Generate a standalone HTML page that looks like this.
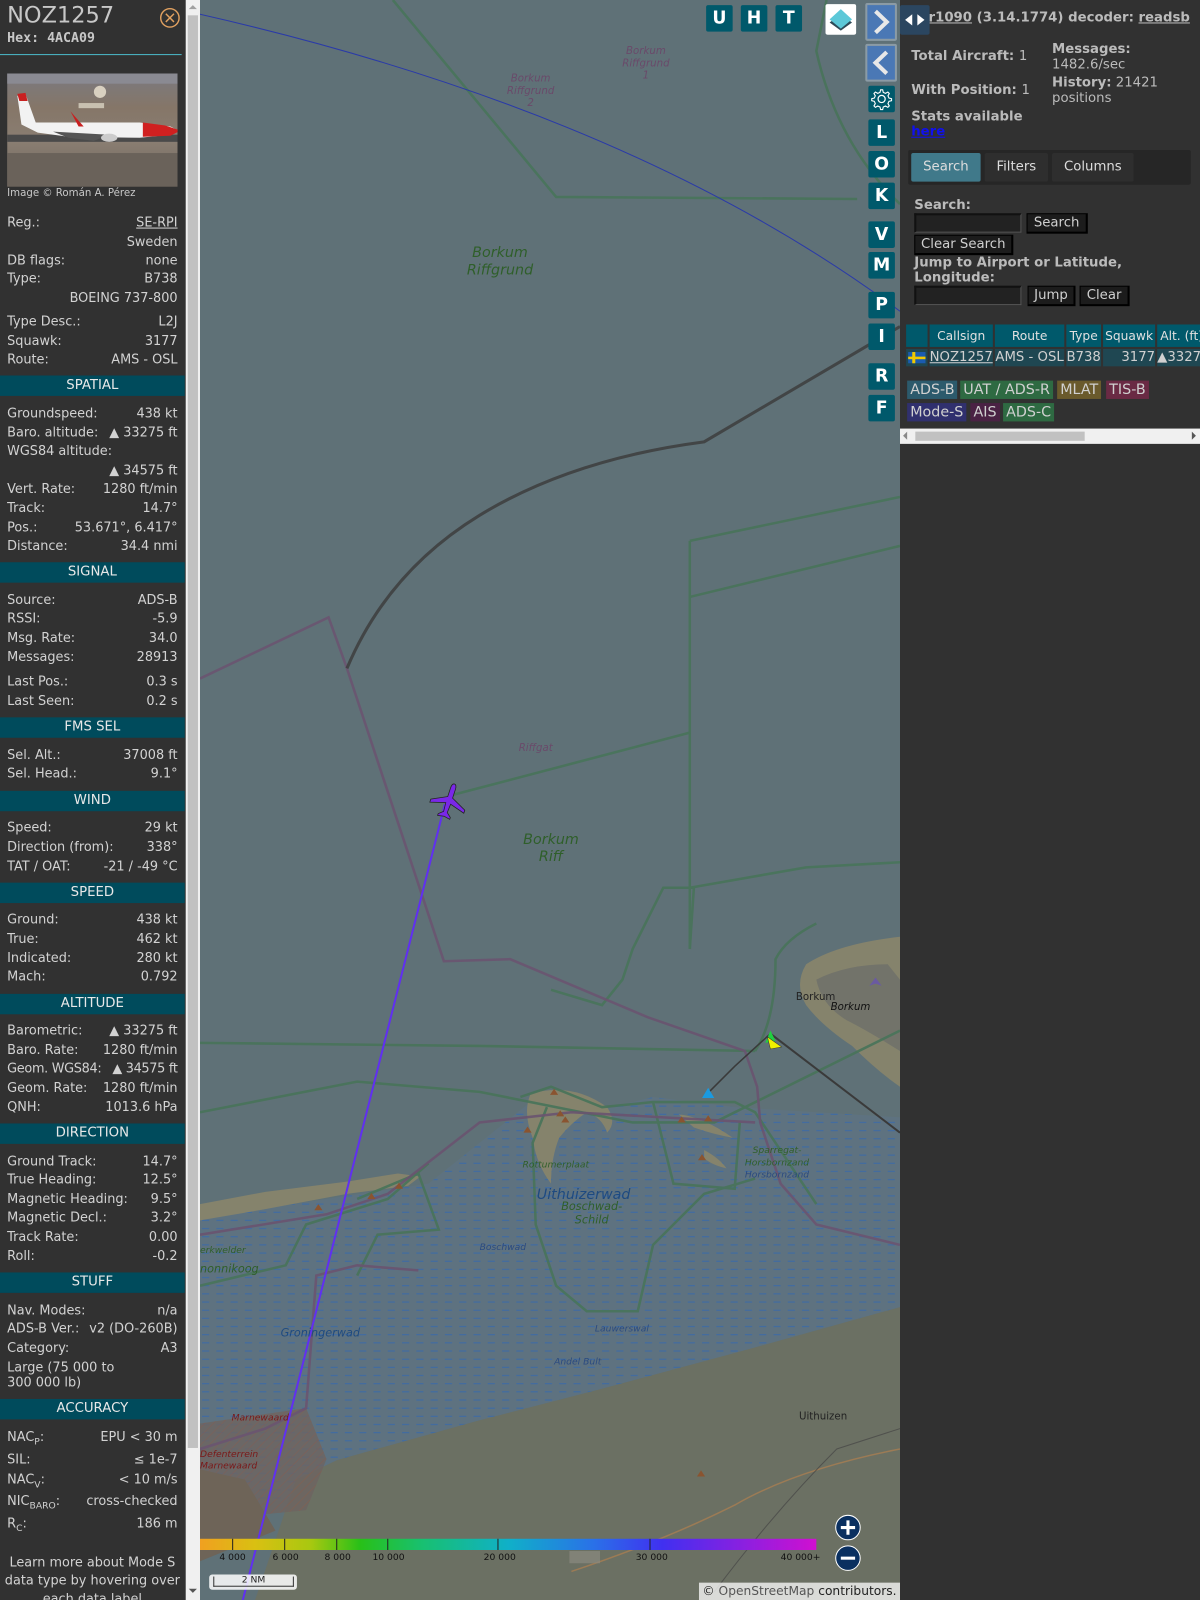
<!DOCTYPE html>
<html><head><meta charset="utf-8">
<style>
html,body{margin:0;padding:0;background:#313131;overflow:hidden;width:1200px;height:1600px}
#root{position:absolute;left:0;top:0;width:1176px;height:1568px;transform:scale(1.020408);transform-origin:0 0;overflow:hidden;font-family:"DejaVu Sans","Liberation Sans",sans-serif;font-size:13px;color:#d2d2d2}
.a{position:absolute}
.r{position:absolute;left:7px;width:167px;height:18px;line-height:18px;white-space:nowrap;display:flex;justify-content:space-between;font-size:12.6px}
.h{position:absolute;left:0;width:181px;height:20px;line-height:20px;background:#004b5c;color:#e8e8e8;text-align:center}
.btn{position:absolute;width:26px;height:26px;background:#00596b;border-radius:2px;color:#fff;font-weight:bold;font-size:17px;text-align:center;line-height:26px;font-family:"DejaVu Sans",sans-serif}
.rb{position:absolute;background:#1c1c1c;border:1px solid #000;border-right:2px solid #000;border-bottom:2px solid #000;color:#d0d0d0;font-size:13px;line-height:17px;text-align:center;box-sizing:border-box}
.inp{position:absolute;background:#222;border-top:2px solid #111;border-left:2px solid #111;border-bottom:1px solid #555;border-right:1px solid #555;box-sizing:border-box}
.th{position:absolute;top:318px;height:22px;line-height:22px;background:#00596b;color:#e0e0e0;text-align:center;font-size:12px}
.td{position:absolute;top:342px;height:17px;line-height:17px;background:#1f4752;color:#d0d0d0;font-size:13px;white-space:nowrap;overflow:hidden}
.bd{position:absolute;height:18px;line-height:18px;font-size:14px;color:#d0d0d0;padding:0 3px}
.ml{position:absolute;font-style:italic;color:#2f5f2a;font-size:14px;text-align:center;line-height:17px}
.sl{position:absolute;font-style:italic;color:#6a4a6a;font-size:10px;text-align:center;line-height:12px}
.lg{position:absolute;top:1522px;font-size:9px;color:#111}
</style></head><body>
<div id="root">

<svg class="a" style="left:196px;top:0" width="686" height="1568" viewBox="196 0 686 1568">
<defs>
<pattern id="wd" width="14" height="8" patternUnits="userSpaceOnUse"><rect width="14" height="8" fill="#5e7280"/><line x1="2" y1="4" x2="9" y2="4" stroke="#3b6aa8" stroke-width="1"/></pattern>
<pattern id="hp" width="6" height="6" patternUnits="userSpaceOnUse" patternTransform="rotate(45)"><rect width="6" height="6" fill="#6e6460"/><line x1="0" y1="0" x2="0" y2="6" stroke="#8a5a4a" stroke-width="1"/></pattern>
<linearGradient id="lgd" x1="196" x2="800" gradientUnits="userSpaceOnUse">
<stop offset="0" stop-color="#f0a020"/><stop offset="0.09" stop-color="#d9c012"/><stop offset="0.18" stop-color="#a8c810"/><stop offset="0.26" stop-color="#28c018"/><stop offset="0.36" stop-color="#18c070"/><stop offset="0.5" stop-color="#10b0c8"/><stop offset="0.64" stop-color="#2a70e8"/><stop offset="0.75" stop-color="#4030f0"/><stop offset="0.88" stop-color="#8a20e0"/><stop offset="1" stop-color="#d010d0"/></linearGradient>
</defs>
<rect x="196" y="0" width="686" height="1568" fill="#5f7177"/>
<path d="M196,1195 L300,1178 L420,1160 L470,1120 L520,1080 L600,1085 L640,1075 L720,1085 L800,1090 L882,1095 L882,1281 L720,1326 L590,1361 L466,1393 L330,1431 L280,1470 L196,1480 Z" fill="url(#wd)"/>
<path d="M250,1568 L290,1450 L330,1431 L466,1393 L590,1361 L720,1326 L882,1281 L882,1568 Z" fill="#6b7063"/>
<path d="M196,1395 L300,1380 L320,1430 L300,1480 L196,1490 Z" fill="url(#hp)" opacity="0.8"/>
<path d="M196,1440 L240,1450 L270,1500 L196,1530 Z" fill="#6e6458"/>
<path d="M196,1180 L260,1168 L340,1158 L390,1150 L412,1153 L400,1162 L340,1170 L260,1185 L196,1196 Z" fill="#85836c"/>
<path d="M520,1072 Q560,1060 595,1085 Q605,1100 595,1110 Q590,1095 575,1090 Q560,1100 548,1115 Q540,1135 540,1160 Q525,1140 522,1115 Q512,1090 520,1072 Z" fill="#85836c"/>
<path d="M665,1092 Q690,1095 718,1115 Q700,1112 680,1105 Z" fill="#85836c"/>
<path d="M690,1127 Q705,1135 712,1145 Q698,1142 690,1135 Z" fill="#85836c"/>
<path d="M790,945 Q820,925 882,918 L882,1065 Q860,1050 835,1025 Q805,1005 790,985 Q778,965 790,945 Z" fill="#85836c"/>
<path d="M800,960 Q830,945 870,945 L882,960 L882,1030 Q850,1010 830,1000 Q805,985 800,960 Z" fill="#72736a"/>
<g fill="none" stroke="#48745a" stroke-width="2.5" opacity="0.9">
<path d="M385,0 L545,193 L840,195"/>
<path d="M676,530 L882,487"/><path d="M676,585 L882,535"/>
<path d="M676,530 L676,930"/>
<path d="M440,780 L676,718"/>
<path d="M676,870 L790,850 L882,845"/>
<path d="M196,1022 L470,1025 L740,1030"/>
<path d="M196,1090 L350,1060 L470,1070 L620,1100 L700,1100 L882,1010"/>
<path d="M510,1075 L540,1065 L590,1085 L640,1080 L720,1080 L740,1090 L780,1150 L800,1180"/>
<path d="M536,1085 L522,1120 L525,1200 L545,1260 L575,1285 L625,1285 L640,1220 L690,1170 L740,1155"/>
<path d="M640,1080 L660,1160 L720,1165 L725,1100"/>
<path d="M196,1260 L280,1240 L300,1200 L380,1175 L420,1140"/>
<path d="M350,1175 L410,1150 L430,1205 L370,1210 L350,1250"/>
<path d="M882,200 Q820,140 800,50 L810,0"/>
<path d="M740,1030 Q760,1000 760,940 Q770,920 800,905"/>
<path d="M676,930 L680,870 L650,870 L620,930 L610,960 L590,985 L540,970"/>
</g>
<g fill="none" stroke="#6a5470" stroke-width="2.5" opacity="0.9">
<path d="M196,665 L322,605 L340,655 L435,942 L500,940 L635,997 L730,1030 L742,1065 L745,1100 L765,1160 L800,1200 L882,1220"/>
<path d="M196,1420 L260,1400 L300,1380 L310,1250 L350,1240 L410,1245"/>
<path d="M196,1210 L320,1190 L380,1170 L470,1100 L560,1090 L650,1095 L740,1100"/>
</g>
<path d="M340,655 Q380,560 470,505 Q560,450 690,433 L882,320" fill="none" stroke="#3d3d3d" stroke-width="3" opacity="0.85"/>
<path d="M755,1013 L882,1110" fill="none" stroke="#3a3a3a" stroke-width="2"/>
<path d="M755,1013 L720,1045 L690,1075" fill="none" stroke="#3a3a3a" stroke-width="1.5"/>
<path d="M196,14 Q620,110 882,305" fill="none" stroke="#2a3aa8" stroke-width="1"/>
<path d="M560,1540 Q650,1510 720,1475 Q780,1440 882,1420" fill="none" stroke="#b08050" stroke-width="1.5" opacity="0.7"/>
<path d="M700,1560 Q760,1480 820,1420 L882,1400" fill="none" stroke="#444" stroke-width="1" opacity="0.7"/>
<g fill="#8a5430">
<path d="M539,1073 l4,-6 l4,6z"/><path d="M545,1094 l4,-6 l4,6z"/><path d="M550,1100 l4,-6 l4,6z"/><path d="M513,1110 l4,-6 l4,6z"/><path d="M664,1100 l4,-6 l4,6z"/><path d="M690,1099 l4,-6 l4,6z"/><path d="M684,1137 l4,-6 l4,6z"/><path d="M387,1165 l4,-6 l4,6z"/><path d="M308,1186 l4,-6 l4,6z"/><path d="M360,1175 l4,-6 l4,6z"/><path d="M683,1447 l4,-6 l4,6z"/></g>
<path d="M688,1076 L700,1076 L694,1066 Z" fill="#1a9ae0"/>
<path d="M750,1022 L755,1010 L760,1020 Z" fill="#20d040"/>
<path d="M752,1016 L766,1026 L755,1028 Z" fill="#f0f000" stroke="#333" stroke-width="0.5"/>
<path d="M852,966 l6,-8 l6,8 l-6,-2z" fill="#6a5aa0"/>
<path d="M436,788 L238,1568" stroke="#6030f0" stroke-width="2"/>
<g transform="translate(440,785) rotate(18) scale(1.25)">
<path d="M0,-14 C1.5,-14 2,-12 2,-10 L2,-3 L14,3 L14,5.5 L2,2 L1.5,9 L5,12 L5,13.5 L0,12.5 L-5,13.5 L-5,12 L-1.5,9 L-2,2 L-14,5.5 L-14,3 L-2,-3 L-2,-10 C-2,-12 -1.5,-14 0,-14 Z" fill="#7a28e8" stroke="#222" stroke-width="0.6"/></g>
<rect x="196" y="1508" width="604" height="11" fill="url(#lgd)"/>
<g stroke="#222" stroke-width="1"><line x1="228" y1="1508" x2="228" y2="1519"/><line x1="279" y1="1508" x2="279" y2="1519"/><line x1="330" y1="1508" x2="330" y2="1519"/><line x1="380" y1="1508" x2="380" y2="1519"/><line x1="488" y1="1508" x2="488" y2="1519"/><line x1="637" y1="1508" x2="637" y2="1519"/></g>
<circle cx="831" cy="1497" r="12" fill="#0a3060" stroke="#fff" stroke-width="1"/>
<path d="M824,1497 h14 M831,1490 v14" stroke="#fff" stroke-width="3"/>
<circle cx="831" cy="1527" r="12" fill="#0a3060" stroke="#fff" stroke-width="1"/>
<path d="M824,1527 h14" stroke="#fff" stroke-width="3"/>
<rect x="558" y="1520" width="30" height="12" fill="#8a8a80" opacity="0.7"/>
</svg>

<div class="ml" style="left:440px;top:240px;width:100px">Borkum<br>Riffgrund</div>
<div class="ml" style="left:500px;top:815px;width:80px">Borkum<br>Riff</div>
<div class="sl" style="left:480px;top:72px;width:80px">Borkum<br>Riffgrund<br>2</div>
<div class="sl" style="left:593px;top:45px;width:80px">Borkum<br>Riffgrund<br>1</div>
<div class="sl" style="left:500px;top:728px;width:50px">Riffgat</div>
<div class="a" style="left:526px;top:1163px;font-style:italic;color:#1e4a80;font-size:14px">Uithuizerwad</div>
<div class="a" style="left:550px;top:1176px;font-style:italic;color:#2f5f2a;font-size:11px;text-align:center;line-height:13px">Boschwad-<br>Schild</div>
<div class="a" style="left:512px;top:1137px;font-style:italic;color:#2f5f2a;font-size:9px">Rottumerplaat</div>
<div class="a" style="left:730px;top:1122px;font-style:italic;color:#2f5f2a;font-size:9px;line-height:12px;text-align:center">Sparregat-<br>Horsbornzand<br><span style="color:#2a4a80">Horsbornzand</span></div>
<div class="a" style="left:780px;top:972px;color:#222;font-size:10px">Borkum</div>
<div class="a" style="left:814px;top:982px;color:#111;font-size:10px;font-style:italic">Borkum</div>
<div class="a" style="left:470px;top:1218px;font-style:italic;color:#2a4a80;font-size:9px">Boschwad</div>
<div class="a" style="left:583px;top:1298px;font-style:italic;color:#2a4a80;font-size:9px">Lauwerswal</div>
<div class="a" style="left:543px;top:1330px;font-style:italic;color:#2a4a80;font-size:9px">Andel Bult</div>
<div class="a" style="left:275px;top:1300px;font-style:italic;color:#1e4a80;font-size:11px">Groningerwad</div>
<div class="a" style="left:196px;top:1237px;font-style:italic;color:#2f5f2a;font-size:11px">nonnikoog</div>
<div class="a" style="left:196px;top:1221px;font-style:italic;color:#2f5f2a;font-size:9px">erkwelder</div>
<div class="a" style="left:227px;top:1385px;font-style:italic;color:#7a1818;font-size:9px">Marnewaard</div>
<div class="a" style="left:196px;top:1421px;font-style:italic;color:#7a1818;font-size:9px;line-height:11px">Defenterrein<br>Marnewaard</div>
<div class="a" style="left:783px;top:1383px;color:#222;font-size:10px">Uithuizen</div>
<div class="lg" style="left:215px">4 000</div><div class="lg" style="left:267px">6 000</div><div class="lg" style="left:318px">8 000</div><div class="lg" style="left:365px">10 000</div><div class="lg" style="left:474px">20 000</div><div class="lg" style="left:623px">30 000</div><div class="lg" style="left:765px">40 000+</div>
<div class="a" style="left:205px;top:1543px;width:86px;height:15px;background:rgba(255,255,255,0.85);border-radius:3px"></div>
<div class="a" style="left:209px;top:1545px;width:77px;height:9px;border:1px solid #333;border-top:none;font-size:9px;line-height:9px;text-align:center;color:#222">2 NM</div>
<div class="a" style="left:685px;top:1551px;width:197px;height:17px;background:rgba(255,255,255,0.75);font-size:12px;line-height:17px;color:#222;text-align:center">© <span style="color:#555">OpenStreetMap</span> contributors.</div>

<div class="btn" style="left:692px;top:5px">U</div>
<div class="btn" style="left:726px;top:5px">H</div>
<div class="btn" style="left:760px;top:5px">T</div>
<div class="a" style="left:809px;top:4px;width:30px;height:30px;background:#fff;border-radius:2px">
<svg width="30" height="30"><path d="M4,18 L15,10 L26,18 L15,26 Z" fill="#2d4a58"/><path d="M4,15 L15,5 L26,15 L15,24 Z" fill="#5cc8d8"/></svg></div>
<div class="a" style="left:848px;top:3px;width:31px;height:37px;background:#8b9ba5;border-radius:2px"><div class="a" style="left:2px;top:2px;width:27px;height:33px;background:#4a78b5"><svg width="27" height="33"><path d="M8,6 L19,16.5 L8,27" fill="none" stroke="#e8e8e8" stroke-width="4"/></svg></div></div>
<div class="a" style="left:848px;top:43px;width:31px;height:37px;background:#8b9ba5;border-radius:2px"><div class="a" style="left:2px;top:2px;width:27px;height:33px;background:#4a78b5"><svg width="27" height="33"><path d="M19,6 L8,16.5 L19,27" fill="none" stroke="#e8e8e8" stroke-width="4"/></svg></div></div>
<div class="btn" style="left:851px;top:84px"><svg width="26" height="26"><circle cx="13" cy="13" r="3.5" fill="none" stroke="#fff" stroke-width="1.2"/><path d="M13,4 l2,0 l0.6,2.5 l2.2,1 l2.3,-1.3 l1.4,1.4 l-1.3,2.3 l1,2.2 l2.5,0.6 l0,2 l-2.5,0.6 l-1,2.2 l1.3,2.3 l-1.4,1.4 l-2.3,-1.3 l-2.2,1 l-0.6,2.5 l-2,0 l-0.6,-2.5 l-2.2,-1 l-2.3,1.3 l-1.4,-1.4 l1.3,-2.3 l-1,-2.2 l-2.5,-0.6 l0,-2 l2.5,-0.6 l1,-2.2 l-1.3,-2.3 l1.4,-1.4 l2.3,1.3 l2.2,-1 z" transform="translate(-1,0)" fill="none" stroke="#fff" stroke-width="1.1"/></svg></div>
<div class="btn" style="left:851px;top:117px">L</div>
<div class="btn" style="left:851px;top:148px">O</div>
<div class="btn" style="left:851px;top:179px">K</div>
<div class="btn" style="left:851px;top:217px">V</div>
<div class="btn" style="left:851px;top:247px">M</div>
<div class="btn" style="left:851px;top:286px">P</div>
<div class="btn" style="left:851px;top:317px">I</div>
<div class="btn" style="left:851px;top:356px">R</div>
<div class="btn" style="left:851px;top:387px">F</div>

<div class="a" style="left:882px;top:0;width:294px;height:1568px;background:#313131"></div>
<div class="a" style="left:895px;top:10px;font-weight:bold;color:#bbb;font-size:13px;white-space:nowrap"><span style="text-decoration:underline">tar1090</span> (3.14.1774) decoder: <span style="text-decoration:underline">readsb</span></div>
<div class="a" style="left:882px;top:5px;width:29px;height:29px;background:#2b4660;border-radius:2px"><svg width="29" height="29"><path d="M12,9 L5,14.5 L12,20 Z M17,9 L24,14.5 L17,20 Z" fill="#fff"/></svg></div>
<div class="a" style="left:893px;top:48px;font-weight:bold;color:#bbb">Total Aircraft: <span style="font-weight:normal">1</span></div>
<div class="a" style="left:893px;top:81px;font-weight:bold;color:#bbb">With Position: <span style="font-weight:normal">1</span></div>
<div class="a" style="left:893px;top:107px;font-weight:bold;color:#bbb;line-height:15px">Stats available<br><span style="color:#1010ee;text-decoration:underline">here</span></div>
<div class="a" style="left:1031px;top:41px;color:#bbb;line-height:15px"><b>Messages:</b><br>1482.6/sec</div>
<div class="a" style="left:1031px;top:74px;color:#bbb;line-height:15px"><b>History:</b> 21421<br>positions</div>
<div class="a" style="left:890px;top:147px;width:277px;height:34px;background:#262626;border-radius:2px"></div>
<div class="a" style="left:893px;top:150px;width:68px;height:28px;background:#40798a;border-radius:2px;color:#ddd;text-align:center;line-height:28px">Search</div>
<div class="a" style="left:965px;top:150px;width:62px;height:28px;background:#2e2e2e;border-radius:2px;color:#ddd;text-align:center;line-height:28px">Filters</div>
<div class="a" style="left:1031px;top:150px;width:80px;height:28px;background:#2e2e2e;border-radius:2px;color:#ddd;text-align:center;line-height:28px">Columns</div>
<div class="a" style="left:896px;top:194px;font-weight:bold;color:#bbb">Search:</div>
<div class="inp" style="left:896px;top:209px;width:105px;height:19px"></div>
<div class="rb" style="left:1006px;top:209px;width:60px;height:20px">Search</div>
<div class="rb" style="left:896px;top:230px;width:97px;height:20px">Clear Search</div>
<div class="a" style="left:896px;top:250px;font-weight:bold;color:#bbb;line-height:15px">Jump to Airport or Latitude,<br>Longitude:</div>
<div class="inp" style="left:896px;top:280px;width:105px;height:19px"></div>
<div class="rb" style="left:1007px;top:280px;width:47px;height:20px">Jump</div>
<div class="rb" style="left:1058px;top:280px;width:49px;height:20px">Clear</div>
<div class="th" style="left:888px;width:21px"></div>
<div class="th" style="left:911px;width:62px">Callsign</div>
<div class="th" style="left:975px;width:68px">Route</div>
<div class="th" style="left:1045px;width:34px">Type</div>
<div class="th" style="left:1081px;width:51px">Squawk</div>
<div class="th" style="left:1134px;width:42px;text-align:left;padding-left:3px;white-space:nowrap">Alt. (ft)</div>
<div class="td" style="left:888px;width:21px"><svg width="21" height="17"><rect x="2" y="3" width="17" height="11" fill="#1a5bb0"/><rect x="6" y="3" width="3" height="11" fill="#f0c800"/><rect x="2" y="7.5" width="17" height="2.5" fill="#f0c800"/></svg></div>
<div class="td" style="left:911px;width:62px;text-decoration:underline">NOZ1257</div>
<div class="td" style="left:975px;width:68px;text-align:center">AMS - OSL</div>
<div class="td" style="left:1045px;width:34px;text-align:center">B738</div>
<div class="td" style="left:1081px;width:51px;text-align:right">3177</div>
<div class="td" style="left:1134px;width:42px">&#9650;3327</div>
<div class="bd" style="left:889px;top:373px;background:#2c5a6c">ADS-B</div>
<div class="bd" style="left:941px;top:373px;background:#2e6a42">UAT / ADS-R</div>
<div class="bd" style="left:1036px;top:373px;background:#6a5a2c">MLAT</div>
<div class="bd" style="left:1084px;top:373px;background:#6a2a44">TIS-B</div>
<div class="bd" style="left:889px;top:395px;background:#30306e">Mode-S</div>
<div class="bd" style="left:951px;top:395px;background:#4a2244">AIS</div>
<div class="bd" style="left:983px;top:395px;background:#2e6a42">ADS-C</div>
<div class="a" style="left:882px;top:420px;width:294px;height:15px;background:#f0f0f0"></div>
<div class="a" style="left:897px;top:423px;width:166px;height:9px;background:#c1c1c1"></div>
<div class="a" style="left:885px;top:423px;width:0;height:0;border:4px solid transparent;border-right-color:#888;border-left:none"></div>
<div class="a" style="left:1168px;top:423px;width:0;height:0;border:4px solid transparent;border-left-color:#555;border-right:none"></div>

<div class="a" style="left:0;top:0;width:182px;height:1568px;background:#313131"></div>
<div class="a" style="left:182px;top:0;width:14px;height:1568px;background:#f0f0f0"></div>
<div class="a" style="left:184px;top:15px;width:10px;height:1404px;background:#c1c1c1"></div>
<div class="a" style="left:185px;top:5px;width:0;height:0;border:4px solid transparent;border-bottom-color:#a0a0a0;border-top:none"></div>
<div class="a" style="left:185px;top:1557px;width:0;height:0;border:4px solid transparent;border-top-color:#555;border-bottom:none"></div>

<div class="a" style="left:7px;top:3px;font-size:22px;color:#c8c8c8;line-height:26px">NOZ1257</div>
<div class="a" style="left:7px;top:30px;font-family:'DejaVu Sans Mono','Liberation Mono',monospace;font-weight:bold;font-size:13px;color:#c8c8c8">Hex: 4ACA09</div>
<svg class="a" style="left:156px;top:7px" width="21" height="21"><circle cx="10.5" cy="10.5" r="9" fill="none" stroke="#e0a060" stroke-width="1.4"/><path d="M6.5,6.5 L14.5,14.5 M14.5,6.5 L6.5,14.5" stroke="#e0a060" stroke-width="1.4"/></svg>
<div class="a" style="left:0;top:53px;width:178px;height:1px;background:#4ab8c8"></div>

<svg class="a" style="left:7px;top:72px" width="167" height="111" viewBox="0 0 167 111">
<defs><linearGradient id="sky" x1="0" y1="0" x2="0" y2="1"><stop offset="0" stop-color="#7a7a80"/><stop offset="0.3" stop-color="#857668"/><stop offset="0.6" stop-color="#8a7e72"/><stop offset="1" stop-color="#6e665e"/></linearGradient></defs>
<rect width="167" height="111" fill="url(#sky)"/>
<rect y="0" width="167" height="10" fill="#8a8a92"/>
<rect y="60" width="167" height="7" fill="#4a4a4a"/>
<rect y="78" width="167" height="33" fill="#6a625a"/>
<circle cx="91" cy="18" r="6" fill="#d8d0c0"/>
<rect x="70" y="29" width="25" height="5" fill="#c8c0b0"/>
<path d="M10,22 L18,20 L28,48 L130,48 L160,52 L168,56 L160,60 L130,63 L60,62 L30,58 L14,50 Z" fill="#f2f2f2"/>
<path d="M10,20 L18,19 L20,27 L12,27 Z" fill="#c82020"/>
<path d="M133,48 L155,51 L170,56 L160,61 L133,62 Z" fill="#d02020"/>
<path d="M62,37 L75,52 L70,52 Z" fill="#c82020"/>
<path d="M45,57 L100,60 L85,66 L60,63 Z" fill="#555"/>
<ellipse cx="100" cy="63" rx="8" ry="4" fill="#ccc"/>
</svg>
<div class="a" style="left:7px;top:184px;font-size:10px;color:#c8c8c8">Image © Román A. Pérez</div>

<div class="r" style="top:209px"><span>Reg.:</span><span style="text-decoration:underline">SE-RPI</span></div>
<div class="r" style="top:228px"><span></span><span>Sweden</span></div>
<div class="r" style="top:246px"><span>DB flags:</span><span>none</span></div>
<div class="r" style="top:264px"><span>Type:</span><span>B738</span></div>
<div class="r" style="top:283px"><span></span><span>BOEING 737-800</span></div>
<div class="r" style="top:306px"><span>Type Desc.:</span><span>L2J</span></div>
<div class="r" style="top:325px"><span>Squawk:</span><span>3177</span></div>
<div class="r" style="top:343px"><span>Route:</span><span>AMS - OSL</span></div>
<div class="h" style="top:368px">SPATIAL</div>
<div class="r" style="top:396px"><span>Groundspeed:</span><span>438 kt</span></div>
<div class="r" style="top:415px"><span>Baro. altitude:</span><span>&#9650; 33275 ft</span></div>
<div class="r" style="top:433px"><span>WGS84 altitude:</span><span></span></div>
<div class="r" style="top:452px"><span></span><span>&#9650; 34575 ft</span></div>
<div class="r" style="top:470px"><span>Vert. Rate:</span><span>1280 ft/min</span></div>
<div class="r" style="top:489px"><span>Track:</span><span>14.7°</span></div>
<div class="r" style="top:508px"><span>Pos.:</span><span>53.671°, 6.417°</span></div>
<div class="r" style="top:526px"><span>Distance:</span><span>34.4 nmi</span></div>
<div class="h" style="top:551px">SIGNAL</div>
<div class="r" style="top:579px"><span>Source:</span><span>ADS-B</span></div>
<div class="r" style="top:597px"><span>RSSI:</span><span>-5.9</span></div>
<div class="r" style="top:616px"><span>Msg. Rate:</span><span>34.0</span></div>
<div class="r" style="top:635px"><span>Messages:</span><span>28913</span></div>
<div class="r" style="top:659px"><span>Last Pos.:</span><span>0.3 s</span></div>
<div class="r" style="top:678px"><span>Last Seen:</span><span>0.2 s</span></div>
<div class="h" style="top:703px">FMS SEL</div>
<div class="r" style="top:731px"><span>Sel. Alt.:</span><span>37008 ft</span></div>
<div class="r" style="top:749px"><span>Sel. Head.:</span><span>9.1°</span></div>
<div class="h" style="top:775px">WIND</div>
<div class="r" style="top:802px"><span>Speed:</span><span>29 kt</span></div>
<div class="r" style="top:821px"><span>Direction (from):</span><span>338°</span></div>
<div class="r" style="top:840px"><span>TAT / OAT:</span><span>-21 / -49 °C</span></div>
<div class="h" style="top:865px">SPEED</div>
<div class="r" style="top:892px"><span>Ground:</span><span>438 kt</span></div>
<div class="r" style="top:911px"><span>True:</span><span>462 kt</span></div>
<div class="r" style="top:930px"><span>Indicated:</span><span>280 kt</span></div>
<div class="r" style="top:948px"><span>Mach:</span><span>0.792</span></div>
<div class="h" style="top:974px">ALTITUDE</div>
<div class="r" style="top:1001px"><span>Barometric:</span><span>&#9650; 33275 ft</span></div>
<div class="r" style="top:1020px"><span>Baro. Rate:</span><span>1280 ft/min</span></div>
<div class="r" style="top:1038px;letter-spacing:-0.3px"><span>Geom. WGS84:</span><span>&#9650; 34575 ft</span></div>
<div class="r" style="top:1057px"><span>Geom. Rate:</span><span>1280 ft/min</span></div>
<div class="r" style="top:1076px"><span>QNH:</span><span>1013.6 hPa</span></div>
<div class="h" style="top:1101px">DIRECTION</div>
<div class="r" style="top:1129px"><span>Ground Track:</span><span>14.7°</span></div>
<div class="r" style="top:1147px"><span>True Heading:</span><span>12.5°</span></div>
<div class="r" style="top:1166px"><span>Magnetic Heading:</span><span>9.5°</span></div>
<div class="r" style="top:1184px"><span>Magnetic Decl.:</span><span>3.2°</span></div>
<div class="r" style="top:1203px"><span>Track Rate:</span><span>0.00</span></div>
<div class="r" style="top:1222px"><span>Roll:</span><span>-0.2</span></div>
<div class="h" style="top:1247px">STUFF</div>
<div class="r" style="top:1275px"><span>Nav. Modes:</span><span>n/a</span></div>
<div class="r" style="top:1293px"><span>ADS-B Ver.:</span><span>v2 (DO-260B)</span></div>
<div class="r" style="top:1312px"><span>Category:</span><span>A3</span></div>
<div class="a" style="left:7px;top:1332px;line-height:15px;font-size:12.6px">Large (75 000 to<br>300 000 lb)</div>
<div class="h" style="top:1371px">ACCURACY</div>
<div class="r" style="top:1399px"><span>NAC<sub style="font-size:9px">P</sub>:</span><span>EPU &lt; 30 m</span></div>
<div class="r" style="top:1421px"><span>SIL:</span><span>≤ 1e-7</span></div>
<div class="r" style="top:1441px"><span>NAC<sub style="font-size:9px">V</sub>:</span><span>&lt; 10 m/s</span></div>
<div class="r" style="top:1462px"><span>NIC<sub style="font-size:9px">BARO</sub>:</span><span>cross-checked</span></div>
<div class="r" style="top:1484px"><span>R<sub style="font-size:9px">C</sub>:</span><span>186 m</span></div>
<div class="a" style="left:0;top:1522px;width:181px;text-align:center;line-height:18px;font-size:12.6px">Learn more about Mode S<br>data type by hovering over<br>each data label</div>

</div>
</body></html>
